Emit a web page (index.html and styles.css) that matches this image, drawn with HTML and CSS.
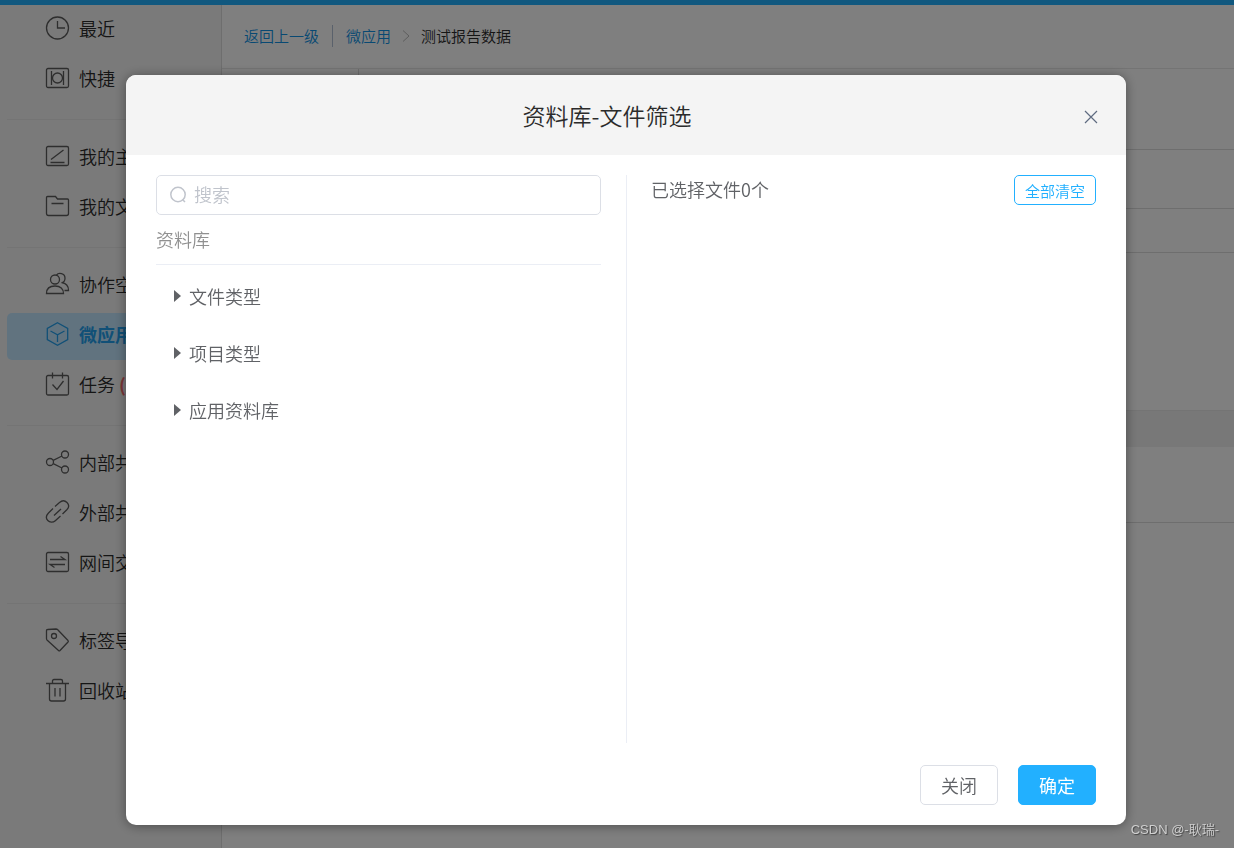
FILE: index.html
```html
<!DOCTYPE html>
<html lang="zh-CN">
<head>
<meta charset="utf-8">
<title>资料库-文件筛选</title>
<link rel="stylesheet" href="styles.css">
</head>
<body>
<div class="page">
  <div class="topbar"></div>
  <div class="shell">
    <nav class="sidebar">
      <div class="group">
        <a class="item" href="#"><svg class="icon" viewBox="0 0 24 24"><circle cx="12.5" cy="12" r="11"/><path d="M12.5 5v7h7.5"/></svg>最近</a>
        <a class="item" href="#"><svg class="icon" viewBox="0 0 24 24"><rect x="1.5" y="2.5" width="22" height="19" rx="1.5"/><path d="M6.5 5v14M18.5 5v14"/><circle cx="12.5" cy="12" r="5"/></svg>快捷</a>
      </div>
      <div class="group">
        <a class="item" href="#"><svg class="icon" viewBox="0 0 24 24"><rect x="1.5" y="2.5" width="22" height="19" rx="1.5"/><path d="M6 15.5L18.5 6M5.5 18.5h14"/></svg>我的主页</a>
        <a class="item" href="#"><svg class="icon" viewBox="0 0 24 24"><path d="M1.5 19.5V3.500q0-1 1-1h8l2 2.500h10q1 0 1 1v13.500q0 2-2 2h-18q-2 0-2-2zM6.500 9.500h12"/></svg>我的文件</a>
      </div>
      <div class="group">
        <a class="item" href="#"><svg class="icon" viewBox="0 0 24 24"><circle cx="10" cy="7.5" r="4.5"/><path d="M1.500 21.500c0-5 3-7.500 8.500-7.500s8.500 2.500 8.500 7.500zM11.500 3.200c2-3 8.500-2 8.500 3 0 2.300-1.500 4.200-3.500 4.500 4.500.5 7 3.300 7 7.800h-4"/></svg>协作空间</a>
        <a class="item active" href="#"><svg class="icon" viewBox="0 0 24 24"><path d="M12.500 .8l10.200 5.600v11.200L12.500 23.200 2.300 17.600V6.400zM5.500 9l7 3.800L19.500 9M12.500 12.800V20"/></svg>微应用</a>
        <a class="item" href="#"><svg class="icon" viewBox="0 0 24 24"><rect x="1.5" y="3.5" width="22" height="19.5" rx="1.5"/><path d="M7.500 .5v6M17.500 .5v6M7.500 12.500l4.500 5 6.500-8.500"/></svg><span>任务 <b class="count">(1)</b></span></a>
      </div>
      <div class="group">
        <a class="item" href="#"><svg class="icon" viewBox="0 0 24 24"><circle cx="5" cy="12" r="3.5"/><circle cx="20" cy="4.5" r="3.5"/><circle cx="20" cy="19.5" r="3.5"/><path d="M8.200 10.300L17 6M8.200 13.700L17 18"/></svg>内部共享</a>
        <a class="item" href="#"><svg class="icon" viewBox="0 0 24 24"><path d="M8 8.500l-4.500 4.500c-2.500 2.500-2.500 5.500-.7 7.500s5 2.500 7.500.2L15.500 16M10 6.500l4.500-4c2.500-2.200 5.500-2 7.500 0s2 5-.2 7.300L17.500 14M9 15.500l7-6.500"/></svg>外部共享</a>
        <a class="item" href="#"><svg class="icon" viewBox="0 0 24 24"><rect x="1.5" y="2.5" width="22" height="19" rx="1.5"/><path d="M5 9.500h15l-4.500-3M20 14.500H5l4.500 3"/></svg>网间交换</a>
      </div>
      <div class="group">
        <a class="item" href="#"><svg class="icon" viewBox="0 0 24 24"><path d="M1.500 2.500q0-1 1-1l8.500-.5q1 0 1.500.5l10.500 11q.7.7 0 1.500l-8 8.500q-.7.7-1.500 0L2 12q-.5-.5-.5-1.500z"/><circle cx="9" cy="8" r="2.5"/></svg>标签导航</a>
        <a class="item" href="#"><svg class="icon" viewBox="0 0 24 24"><path d="M1 5.500h23M7.500 5.500V3q0-1.500 1.500-1.500h7q1.500 0 1.500 1.500v2.500M4.500 5.500V21q0 2 2 2h12q2 0 2-2V5.500M10 10v8.500M15 10v8.500"/></svg>回收站</a>
      </div>
    </nav>
    <main class="main">
      <div class="crumbs">
        <a class="back" href="#">返回上一级</a>
        <a class="link" href="#">微应用</a>
        <svg class="chevron" viewBox="0 0 8 14"><path d="M1 1.500l6 5.500-6 5.500"/></svg>
        <span>测试报告数据</span>
      </div>
      <div class="content">
        <div class="tree-pane"></div>
        <div class="list-pane">
          <div class="row toolbar"></div>
          <div class="row filter"></div>
          <div class="row heading"></div>
          <div class="row summary"></div>
          <div class="band"></div>
          <div class="row record"></div>
        </div>
      </div>
    </main>
  </div>
</div>

<div class="overlay">
  <section class="dialog" role="dialog" aria-modal="true" aria-labelledby="dialog-title">
    <header class="dialog-header">
      <h1 id="dialog-title">资料库-文件筛选</h1>
      <button class="close" type="button" aria-label="关闭"><svg viewBox="0 0 14 14"><path d="M1 1l12 12M13 1L1 13"/></svg></button>
    </header>
    <div class="dialog-body">
      <div class="source">
        <label class="search">
          <svg viewBox="0 0 18 18"><circle cx="9" cy="8.5" r="7.2"/><path d="M13.500 13.500l2.500 2.500"/></svg>
          <input type="text" placeholder="搜索" aria-label="搜索">
        </label>
        <h2>资料库</h2>
        <ul class="tree">
          <li><button type="button">文件类型</button></li>
          <li><button type="button">项目类型</button></li>
          <li><button type="button">应用资料库</button></li>
        </ul>
      </div>
      <div class="selected">
        <p>已选择文件0个</p>
        <button class="btn-clear" type="button">全部清空</button>
      </div>
    </div>
    <footer class="dialog-footer">
      <button class="btn" type="button">关闭</button>
      <button class="btn primary" type="button">确定</button>
    </footer>
  </section>
</div>
<div class="watermark">CSDN @-耿瑞-</div>
</body>
</html>
```
FILE: styles.css
```css
* { box-sizing: border-box; }

body {
  margin: 0;
  font-family: "Noto Sans CJK SC", sans-serif;
  font-weight: 350;
  font-size: 18px;
  line-height: 24px;
  color: #2b2b2b;
  background: #fff;
}

button, input { font: inherit; }
a { color: inherit; text-decoration: none; }
h1, h2, p, ul { margin: 0; padding: 0; font-weight: inherit; }

.page {
  display: flex;
  flex-direction: column;
  height: 100vh;
  overflow: hidden;
}

.topbar { height: 5px; flex: none; background: #22b0ff; }
.shell { display: flex; flex: 1; min-height: 0; }

/* Sidebar */
.sidebar {
  flex: none;
  width: 222px;
  padding: 2px 7px;
  background: #f5f5f5;
  border-right: 1px solid #dcdcdc;
}

.group { display: flex; flex-direction: column; gap: 3px; }

.group + .group {
  margin-top: 15px;
  padding-top: 15px;
  border-top: 1px solid #e8e8e8;
}

.item {
  display: flex;
  align-items: center;
  gap: 10px;
  height: 47px;
  padding: 0 0 6px 38px;
  border-radius: 5px;
  white-space: nowrap;
}

.item.active { background: #c3e7ff; color: #22a0ee; font-weight: 700; }

.icon {
  width: 24px;
  height: 24px;
  flex: none;
  fill: none;
  stroke: #5c5c5c;
  stroke-width: 1.3;
  overflow: visible;
}

.active .icon { stroke: #22a0ee; }
.count { color: #f56c6c; font-weight: 700; }

/* Page behind the dialog */
.main { flex: 1; min-width: 0; display: flex; flex-direction: column; }

.crumbs {
  display: flex;
  align-items: center;
  flex: none;
  height: 64px;
  padding: 0 0 2px 22px;
  border-bottom: 1px solid #e8e8e8;
  font-size: 15px;
  line-height: 22px;
}

.back { padding-right: 13px; margin-right: 13px; border-right: 1px solid #b5c3d6; color: #1093e6; }
.link { color: #1093e6; }
.chevron { width: 8px; height: 14px; margin: 0 11px; fill: none; stroke: #bbb; }
.content { display: flex; }
.tree-pane { width: 137px; border-right: 1px solid #dcdcdc; }
.list-pane { flex: 1; }
.row { border-bottom: 1px solid #dcdcdc; }
.toolbar { height: 81px; }
.filter { height: 59px; }
.heading { height: 44px; }
.summary { height: 158px; border-color: #e8e8e8; }
.band { height: 36px; background: #f0f0f0; }
.record { height: 76px; }

/* Dialog */
.overlay {
  position: fixed;
  inset: 0;
  display: flex;
  padding: 75px 108px 23px 126px;
  background: rgba(0, 0, 0, 0.5);
}

.dialog {
  display: flex;
  flex-direction: column;
  flex: 1;
  background: #fff;
  border-radius: 10px;
  box-shadow: 0 1px 12px rgba(0, 0, 0, 0.4);
  overflow: hidden;
}

.dialog-header {
  display: flex;
  align-items: center;
  gap: 24px;
  height: 80px;
  padding: 0 28px;
  background: #f4f4f4;
}

.dialog-header h1 { flex: 1; font-size: 23px; line-height: 32px; text-align: center; }

.close { width: 14px; height: 14px; margin-top: 4px; padding: 0; border: 0; background: none; }
.close svg { display: block; fill: none; stroke: #5f6b80; stroke-width: 1.2; }

.dialog-body {
  display: grid;
  grid-template-columns: 1fr 1fr;
  flex: 1;
  padding: 20px 30px 0;
}

.source { padding-right: 25px; }

.search {
  display: flex;
  align-items: center;
  gap: 7px;
  height: 40px;
  padding: 0 12px;
  border: 1px solid #dcdfe6;
  border-radius: 5px;
}

.search svg { width: 18px; height: 18px; flex: none; fill: none; stroke: #c0c4cc; stroke-width: 1.5; }
.search input { flex: 1; min-width: 0; padding: 0 0 2px; border: 0; outline: 0; background: none; }
.search input::placeholder { color: #c0c4cc; }

.source h2 {
  padding: 12px 0 13px;
  border-bottom: 1px solid #ebeef5;
  font-size: 18px;
  color: #909090;
}

.tree { padding-top: 2px; list-style: none; }

.tree button {
  display: flex;
  align-items: center;
  gap: 8px;
  width: 100%;
  height: 57px;
  padding: 0 18px;
  border: 0;
  background: none;
  color: #606266;
}

.tree button::before {
  content: "";
  border: 6px solid transparent;
  border-left: 7px solid #606266;
  border-right: 0;
}

.selected {
  display: flex;
  align-items: flex-start;
  justify-content: space-between;
  padding-left: 24px;
  border-left: 1px solid #ebeef5;
  color: #606266;
}

.selected p { padding-top: 2px; }

.btn-clear {
  height: 30px;
  padding: 2px 10px 0;
  border: 1px solid #22b0ff;
  border-radius: 5px;
  background: #fff;
  color: #22b0ff;
  font-size: 15px;
  line-height: 22px;
}

.dialog-footer {
  display: flex;
  justify-content: flex-end;
  gap: 20px;
  padding: 22px 30px 20px;
}

.btn {
  height: 40px;
  padding: 0 20px;
  border: 1px solid #dcdfe6;
  border-radius: 5px;
  background: #fff;
  color: #606266;
}

.btn.primary { border-color: #22b0ff; background: #22b0ff; color: #fff; font-weight: 400; }

.watermark {
  position: fixed;
  right: 15px;
  bottom: 8px;
  font: 350 13px/20px "Liberation Sans", "Noto Sans CJK SC", sans-serif;
  color: #d0d0d0;
  text-shadow: 1px 1px 1px #444;
}
```
